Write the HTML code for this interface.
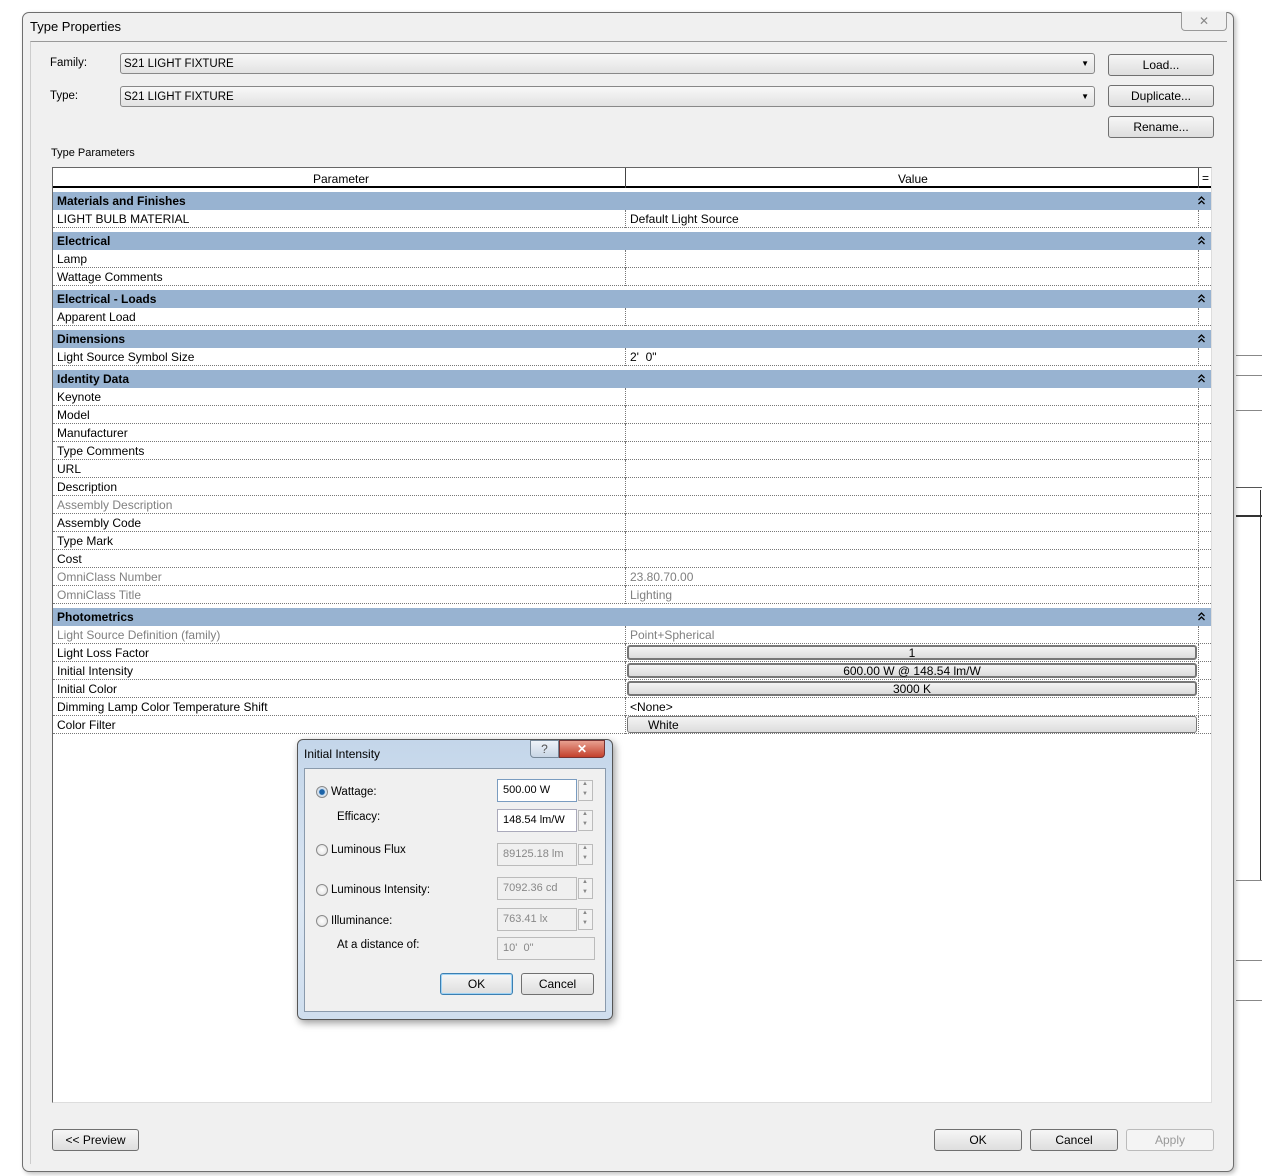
<!DOCTYPE html>
<html><head><meta charset="utf-8"><style>
*{margin:0;padding:0;box-sizing:border-box}
body{width:1262px;height:1176px;position:relative;background:#fff;font-family:"Liberation Sans",sans-serif;font-size:12px;color:#000;overflow:hidden}
.a{position:absolute}
.btn{position:absolute;border:1px solid #707070;border-radius:3px;background:linear-gradient(#f6f6f6,#dedede);text-align:center;font-size:12px;line-height:20px}
.sec{position:absolute;left:53px;width:1158px;height:18px;background:#98b3d1;font-weight:bold;line-height:19px;padding-left:4px}
.sec svg{position:absolute;right:6px;top:4px}
.row{position:absolute;left:53px;width:1158px;height:18px;background:#fff;border-bottom:1px dotted #777;line-height:19px}
.row .p{position:absolute;left:4px;top:0}
.row .v{position:absolute;left:577px;top:0}
.row:before{content:"";position:absolute;left:572px;top:0;height:18px;border-left:1px dotted #777}
.row:after{content:"";position:absolute;left:1145px;top:0;height:18px;border-left:1px dotted #777}
.g{color:#808080}
.vb{position:absolute;left:574px;top:1px;width:570px;height:15px;border:2px solid #777;border-radius:3px;background:linear-gradient(#f4f4f4,#dcdcdc);text-align:center;line-height:12px}
.tb{position:absolute;border:1px solid #aab;background:#fff;font-size:11px;padding-left:5px;line-height:20px;height:23px}
.tb.d{background:#f0f0f0;color:#888;border-color:#bbb}
.sp{position:absolute;width:15px;height:21px;border:1px solid #bbb;background:#f2f2f2}
.sp:before{content:"▲";position:absolute;left:3px;top:0;font-size:6px;color:#888}
.sp:after{content:"▼";position:absolute;left:3px;top:10px;font-size:6px;color:#888}
.rad{position:absolute;width:12px;height:12px;border:1px solid #8a8a8a;border-radius:50%;background:radial-gradient(#fff,#ddd)}
</style></head><body>
<div class="a" style="left:1236px;top:355px;width:26px;border-top:1px solid #888"></div>
<div class="a" style="left:1236px;top:375px;width:26px;border-top:1px solid #888"></div>
<div class="a" style="left:1236px;top:410px;width:26px;border-top:1px solid #888"></div>
<div class="a" style="left:1236px;top:487px;width:26px;border-top:1px solid #555"></div>
<div class="a" style="left:1236px;top:515px;width:26px;border-top:2px solid #333"></div>
<div class="a" style="left:1260px;top:490px;height:390px;border-left:1px solid #333"></div>
<div class="a" style="left:1236px;top:880px;width:26px;border-top:1px solid #888"></div>
<div class="a" style="left:1236px;top:960px;width:26px;border-top:1px solid #888"></div>
<div class="a" style="left:1236px;top:1000px;width:26px;border-top:1px solid #888"></div>

<div class="a" style="left:22px;top:12px;width:1212px;height:1160px;border:1px solid #6e6e6e;border-radius:7px;background:#f0f0f0;box-shadow:2px 2px 5px rgba(0,0,0,.25)"></div>
<div class="a" style="left:30px;top:19px;font-size:13px">Type Properties</div>
<div class="a" style="left:1181px;top:12px;width:46px;height:19px;border:1px solid #999;border-top:none;border-radius:0 0 4px 4px;background:#f0f0f0;text-align:center;color:#888;font-size:12px;line-height:18px">✕</div>
<div class="a" style="left:30px;top:41px;width:1197px;height:1123px;border-top:1px solid #999;border-left:1px solid #ccc;background:#f0f0f0"></div>

<div class="a" style="left:50px;top:57px;font-size:11.5px">Family:</div>
<div class="a" style="left:50px;top:90px;font-size:11.5px">Type:</div>
<div class="a" style="left:120px;top:53px;width:975px;height:21px;border:1px solid #888;border-radius:3px;background:linear-gradient(#f8f8f8,#e2e2e2);padding-left:3px;line-height:20px;font-size:11.5px">S21 LIGHT FIXTURE<span style="position:absolute;right:5px;font-size:8px">▼</span></div>
<div class="a" style="left:120px;top:86px;width:975px;height:21px;border:1px solid #888;border-radius:3px;background:linear-gradient(#f8f8f8,#e2e2e2);padding-left:3px;line-height:20px;font-size:11.5px">S21 LIGHT FIXTURE<span style="position:absolute;right:5px;font-size:8px">▼</span></div>
<div class="btn" style="left:1108px;top:54px;width:106px;height:22px">Load...</div>
<div class="btn" style="left:1108px;top:85px;width:106px;height:22px">Duplicate...</div>
<div class="btn" style="left:1108px;top:116px;width:106px;height:22px">Rename...</div>
<div class="a" style="left:51px;top:147px;font-size:11px">Type Parameters</div>

<div class="a" style="left:52px;top:167px;width:1160px;height:936px;border:1px solid #666;border-right-color:#ddd;border-bottom-color:#ddd;background:#fff"></div>
<div class="a" style="left:53px;top:168px;width:1158px;height:20px;border-bottom:2px solid #000;background:#fff"></div>
<div class="a" style="left:625px;top:168px;height:20px;border-left:1px solid #444"></div>
<div class="a" style="left:1198px;top:168px;height:20px;border-left:1px solid #444"></div>
<div class="a" style="left:313px;top:172px">Parameter</div>
<div class="a" style="left:898px;top:172px">Value</div>
<div class="a" style="left:1202px;top:171px">=</div>

<div class="sec" style="top:192px">Materials and Finishes<svg width="7" height="9"><path d="M0.5 4L3.5 1L6.5 4M0.5 8L3.5 5L6.5 8" stroke="#000" fill="none" stroke-width="1.3"/></svg></div>
<div class="row" style="top:210px"><span class="p">LIGHT BULB MATERIAL</span><span class="v">Default Light Source</span></div>
<div class="sec" style="top:232px">Electrical<svg width="7" height="9"><path d="M0.5 4L3.5 1L6.5 4M0.5 8L3.5 5L6.5 8" stroke="#000" fill="none" stroke-width="1.3"/></svg></div>
<div class="row" style="top:250px"><span class="p">Lamp</span></div>
<div class="row" style="top:268px"><span class="p">Wattage Comments</span></div>
<div class="sec" style="top:290px">Electrical - Loads<svg width="7" height="9"><path d="M0.5 4L3.5 1L6.5 4M0.5 8L3.5 5L6.5 8" stroke="#000" fill="none" stroke-width="1.3"/></svg></div>
<div class="row" style="top:308px"><span class="p">Apparent Load</span></div>
<div class="sec" style="top:330px">Dimensions<svg width="7" height="9"><path d="M0.5 4L3.5 1L6.5 4M0.5 8L3.5 5L6.5 8" stroke="#000" fill="none" stroke-width="1.3"/></svg></div>
<div class="row" style="top:348px"><span class="p">Light Source Symbol Size</span><span class="v">2'&nbsp; 0"</span></div>
<div class="sec" style="top:370px">Identity Data<svg width="7" height="9"><path d="M0.5 4L3.5 1L6.5 4M0.5 8L3.5 5L6.5 8" stroke="#000" fill="none" stroke-width="1.3"/></svg></div>
<div class="row" style="top:388px"><span class="p">Keynote</span></div>
<div class="row" style="top:406px"><span class="p">Model</span></div>
<div class="row" style="top:424px"><span class="p">Manufacturer</span></div>
<div class="row" style="top:442px"><span class="p">Type Comments</span></div>
<div class="row" style="top:460px"><span class="p">URL</span></div>
<div class="row" style="top:478px"><span class="p">Description</span></div>
<div class="row" style="top:496px"><span class="p g">Assembly Description</span></div>
<div class="row" style="top:514px"><span class="p">Assembly Code</span></div>
<div class="row" style="top:532px"><span class="p">Type Mark</span></div>
<div class="row" style="top:550px"><span class="p">Cost</span></div>
<div class="row" style="top:568px"><span class="p g">OmniClass Number</span><span class="v g">23.80.70.00</span></div>
<div class="row" style="top:586px"><span class="p g">OmniClass Title</span><span class="v g">Lighting</span></div>
<div class="sec" style="top:608px">Photometrics<svg width="7" height="9"><path d="M0.5 4L3.5 1L6.5 4M0.5 8L3.5 5L6.5 8" stroke="#000" fill="none" stroke-width="1.3"/></svg></div>
<div class="row" style="top:626px"><span class="p g">Light Source Definition (family)</span><span class="v g">Point+Spherical</span></div>
<div class="row" style="top:644px"><span class="p">Light Loss Factor</span><div class="vb">1</div></div>
<div class="row" style="top:662px"><span class="p">Initial Intensity</span><div class="vb">600.00 W @ 148.54 lm/W</div></div>
<div class="row" style="top:680px"><span class="p">Initial Color</span><div class="vb">3000 K</div></div>
<div class="row" style="top:698px"><span class="p">Dimming Lamp Color Temperature Shift</span><span class="v">&lt;None&gt;</span></div>
<div class="row" style="top:716px"><span class="p">Color Filter</span><div class="vb" style="border-width:1px;text-align:left;padding-left:20px;height:17px;top:0;line-height:17px">White</div></div>

<div class="btn" style="left:52px;top:1129px;width:87px;height:22px">&lt;&lt; Preview</div>
<div class="btn" style="left:934px;top:1129px;width:88px;height:22px">OK</div>
<div class="btn" style="left:1030px;top:1129px;width:88px;height:22px">Cancel</div>
<div class="btn" style="left:1126px;top:1129px;width:88px;height:22px;color:#999;border-color:#bbb;background:#f4f4f4">Apply</div>

<div class="a" style="left:297px;top:739px;width:316px;height:281px;border:1px solid #555;border-radius:6px;background:linear-gradient(#c4d6ea,#dce7f3 60%,#cfdeee);box-shadow:2px 3px 8px rgba(0,0,0,.4)"></div>
<div class="a" style="left:304px;top:747px;font-size:12px">Initial Intensity</div>
<div class="a" style="left:530px;top:740px;width:29px;height:18px;border:1px solid #789;border-radius:0 0 0 4px;background:linear-gradient(#eef3f9,#c8d5e5);text-align:center;font-size:12px;color:#555;line-height:17px">?</div>
<div class="a" style="left:559px;top:740px;width:46px;height:18px;border:1px solid #733;border-radius:0 0 4px 0;background:linear-gradient(#e8a090,#c3402c);text-align:center;font-size:12px;color:#fff;font-weight:bold;line-height:17px">✕</div>
<div class="a" style="left:304px;top:768px;width:302px;height:244px;border:1px solid #8a9aac;background:#f0f0f0"></div>
<div class="rad" style="left:316px;top:786px;background:radial-gradient(#1b63a8 35%,#cde 45%,#eee)"></div>
<div class="a" style="left:331px;top:786px;font-size:11.5px">Wattage:</div>
<div class="a" style="left:337px;top:811px;font-size:11.5px">Efficacy:</div>
<div class="rad" style="left:316px;top:844px"></div>
<div class="a" style="left:331px;top:844px;font-size:11.5px">Luminous Flux</div>
<div class="rad" style="left:316px;top:884px"></div>
<div class="a" style="left:331px;top:884px;font-size:11.5px">Luminous Intensity:</div>
<div class="rad" style="left:316px;top:915px"></div>
<div class="a" style="left:331px;top:915px;font-size:11.5px">Illuminance:</div>
<div class="a" style="left:337px;top:939px;font-size:11.5px">At a distance of:</div>
<div class="tb" style="left:497px;top:779px;width:80px;border-color:#7a9cc0">500.00 W</div><div class="sp" style="left:578px;top:780px"></div>
<div class="tb" style="left:497px;top:809px;width:80px">148.54 lm/W</div><div class="sp" style="left:578px;top:810px"></div>
<div class="tb d" style="left:497px;top:843px;width:80px">89125.18 lm</div><div class="sp" style="left:578px;top:844px"></div>
<div class="tb d" style="left:497px;top:877px;width:80px">7092.36 cd</div><div class="sp" style="left:578px;top:878px"></div>
<div class="tb d" style="left:497px;top:908px;width:80px">763.41 lx</div><div class="sp" style="left:578px;top:909px"></div>
<div class="tb d" style="left:497px;top:937px;width:98px">10'&nbsp; 0"</div>
<div class="btn" style="left:440px;top:973px;width:73px;height:22px;border-color:#3c7fb1;box-shadow:inset 0 0 0 1px #9fd3f5">OK</div>
<div class="btn" style="left:521px;top:973px;width:73px;height:22px">Cancel</div>
</body></html>
